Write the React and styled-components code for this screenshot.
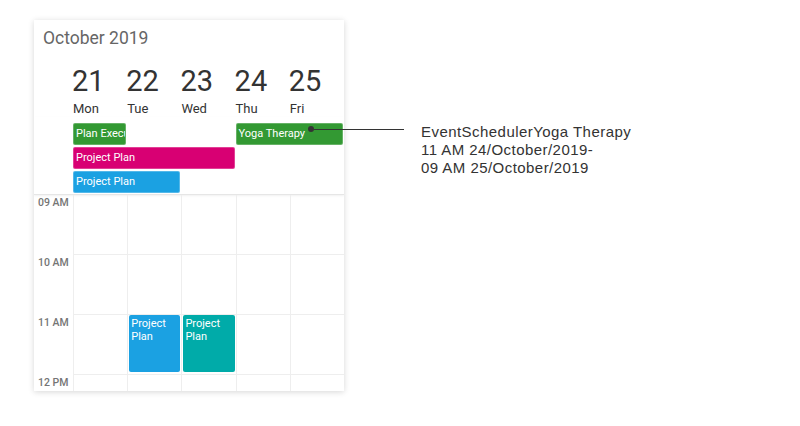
import React from "react";
import styled, { createGlobalStyle } from "styled-components";

const GlobalStyle = createGlobalStyle`
  html, body {
    margin: 0;
    padding: 0;
    background: #ffffff;
  }
  body {
    font-family: Roboto, "Noto Sans", sans-serif;
  }
`;

const Page = styled.div`
  position: relative;
  display: flex;
  align-items: flex-start;
  width: 800px;
  height: 426px;
  padding: 20px 0 0 34px;
  box-sizing: border-box;
`;

const Card = styled.div`
  width: 310px;
  height: 371px;
  background: #fff;
  box-shadow: 0 1px 6px rgba(0, 0, 0, 0.16);
  display: flex;
  flex-direction: column;
  overflow: hidden;
  & > * {
    flex: none;
  }
`;

const Title = styled.div`
  padding: 8px 9px 0;
  height: 37px;
  font-size: 17.5px;
  line-height: 20px;
  color: #666;
`;

const Columns = styled.div`
  display: grid;
  grid-template-columns: 39px repeat(5, 1fr);
`;

const DayHead = styled.div`
  display: flex;
  flex-direction: column;
  color: #333;
`;

const DayNum = styled.div`
  font-size: 29px;
  line-height: 32px;
  margin-left: -1px;
`;

const DayName = styled.div`
  margin-top: 4px;
  font-size: 13px;
  line-height: 16px;
`;

const AllDay = styled.div`
  display: grid;
  grid-template-columns: 39px repeat(5, 1fr);
  grid-template-rows: repeat(3, 22px);
  row-gap: 2px;
  padding: 6px 0 1px;
  border-bottom: 1px solid #e6e6e6;
  box-shadow: 0 1px 2px rgba(0, 0, 0, 0.06);
`;

const AllDayEvent = styled.div`
  grid-column: ${(p) => p.$from + 2} / span ${(p) => p.$span};
  grid-row: ${(p) => p.$row};
  margin: 0 1px 0 0;
  background: ${(p) => p.$color};
  border: 1px solid rgba(255, 255, 255, 0.25);
  border-radius: 2px;
  color: #fff;
  font-size: 11px;
  line-height: 20px;
  padding: 0 2px;
  white-space: nowrap;
  overflow: hidden;
  box-sizing: border-box;
`;

const TimeGrid = styled.div`
  display: grid;
  grid-template-columns: 39px repeat(5, 1fr);
  grid-auto-rows: 60px;
`;

const TimeLabel = styled.div`
  padding: 1px 0 0 4px;
  font-size: 10.5px;
  line-height: 14px;
  font-weight: 500;
  color: #757575;
`;

const Cell = styled.div`
  border-left: 1px solid #eeeeee;
  border-bottom: 1px solid #eeeeee;
  box-sizing: border-box;
  display: flex;
`;

const GridEvent = styled.div`
  flex: 1;
  margin: 0 1px 2px 1px;
  background: ${(p) => p.$color};
  border-radius: 2px;
  color: #fff;
  font-size: 11px;
  line-height: 13px;
  padding: 2px 2px;
`;

const Connector = styled.div`
  position: absolute;
  left: 308px;
  top: 126px;
  width: 96px;
  height: 6px;
  display: flex;
  align-items: center;
`;

const Dot = styled.span`
  width: 6px;
  height: 6px;
  border-radius: 50%;
  background: #333;
  flex: none;
`;

const Line = styled.span`
  flex: 1;
  height: 1px;
  background: #333;
`;

const Tooltip = styled.div`
  margin: 102.5px 0 0 77px;
  font-family: "Liberation Sans", Arial, sans-serif;
  font-size: 15px;
  line-height: 18px;
  color: #333;
  letter-spacing: 0.45px;
`;

const days = [
  { num: 21, name: "Mon" },
  { num: 22, name: "Tue" },
  { num: 23, name: "Wed" },
  { num: 24, name: "Thu" },
  { num: 25, name: "Fri" },
];

const allDay = [
  { title: "Plan Execu", from: 0, span: 1, row: 1, color: "#339933" },
  { title: "Yoga Therapy", from: 3, span: 2, row: 1, color: "#339933" },
  { title: "Project Plan", from: 0, span: 3, row: 2, color: "#d80073" },
  { title: "Project Plan", from: 0, span: 2, row: 3, color: "#1ba1e2" },
];

const hours = ["09 AM", "10 AM", "11 AM", "12 PM"];

const timed = {
  "11 AM": { 1: "#1ba1e2", 2: "#00aba9" },
};

export default function App() {
  return (
    <>
      <GlobalStyle />
      <Page>
        <Card>
          <Title>October 2019</Title>
          <Columns>
            <div />
            {days.map((d) => (
              <DayHead key={d.num}>
                <DayNum>{d.num}</DayNum>
                <DayName>{d.name}</DayName>
              </DayHead>
            ))}
          </Columns>
          <AllDay>
            {allDay.map((e, i) => (
              <AllDayEvent
                key={i}
                $from={e.from}
                $span={e.span}
                $row={e.row}
                $color={e.color}
              >
                {e.title}
              </AllDayEvent>
            ))}
          </AllDay>
          <TimeGrid>
            {hours.map((h) => (
              <React.Fragment key={h}>
                <TimeLabel>{h}</TimeLabel>
                {days.map((d, i) => (
                  <Cell key={d.num}>
                    {timed[h] && timed[h][i] && (
                      <GridEvent $color={timed[h][i]}>
                        Project
                        <br />
                        Plan
                      </GridEvent>
                    )}
                  </Cell>
                ))}
              </React.Fragment>
            ))}
          </TimeGrid>
        </Card>
        <Connector>
          <Dot />
          <Line />
        </Connector>
        <Tooltip>
          EventSchedulerYoga Therapy
          <br />
          11 AM 24/October/2019-
          <br />
          09 AM 25/October/2019
        </Tooltip>
      </Page>
    </>
  );
}
